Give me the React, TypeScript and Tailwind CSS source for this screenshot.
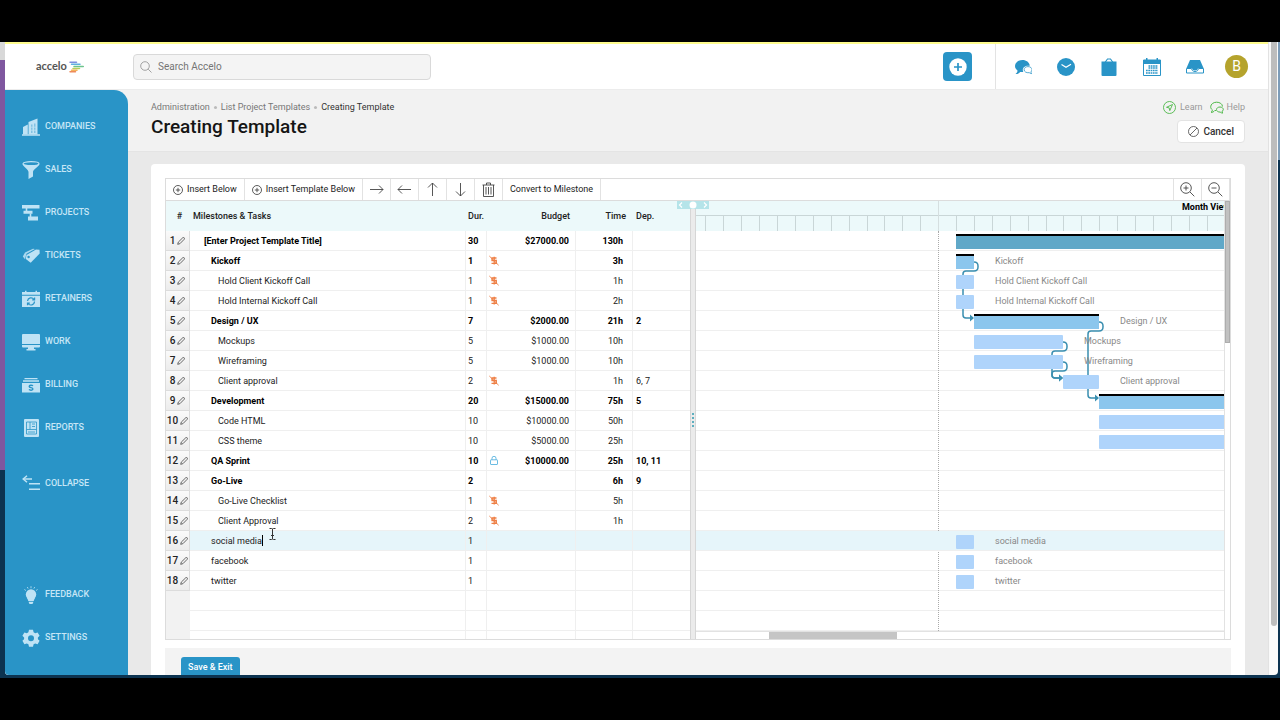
import { useState } from "react";
import type { ReactNode } from "react";

type Task = {
  id: number;
  name: string;
  level: 0 | 1 | 2;
  bold?: boolean;
  dur: number;
  flag?: "nonbillable" | "locked";
  budget?: string;
  time?: string;
  dep?: string;
  bar?: { start: number; days: number; kind: "project" | "milestone" | "task"; label?: string };
};

const tasks: Task[] = [
  { id: 1, name: "[Enter Project Template Title]", level: 0, bold: true, dur: 30, budget: "$27000.00", time: "130h", bar: { start: 0, days: 30, kind: "project" } },
  { id: 2, name: "Kickoff", level: 1, bold: true, dur: 1, flag: "nonbillable", time: "3h", bar: { start: 0, days: 1, kind: "milestone", label: "Kickoff" } },
  { id: 3, name: "Hold Client Kickoff Call", level: 2, dur: 1, flag: "nonbillable", time: "1h", bar: { start: 0, days: 1, kind: "task", label: "Hold Client Kickoff Call" } },
  { id: 4, name: "Hold Internal Kickoff Call", level: 2, dur: 1, flag: "nonbillable", time: "2h", bar: { start: 0, days: 1, kind: "task", label: "Hold Internal Kickoff Call" } },
  { id: 5, name: "Design / UX", level: 1, bold: true, dur: 7, budget: "$2000.00", time: "21h", dep: "2", bar: { start: 1, days: 7, kind: "milestone", label: "Design / UX" } },
  { id: 6, name: "Mockups", level: 2, dur: 5, budget: "$1000.00", time: "10h", bar: { start: 1, days: 5, kind: "task", label: "Mockups" } },
  { id: 7, name: "Wireframing", level: 2, dur: 5, budget: "$1000.00", time: "10h", bar: { start: 1, days: 5, kind: "task", label: "Wireframing" } },
  { id: 8, name: "Client approval", level: 2, dur: 2, flag: "nonbillable", time: "1h", dep: "6, 7", bar: { start: 6, days: 2, kind: "task", label: "Client approval" } },
  { id: 9, name: "Development", level: 1, bold: true, dur: 20, budget: "$15000.00", time: "75h", dep: "5", bar: { start: 8, days: 20, kind: "milestone" } },
  { id: 10, name: "Code HTML", level: 2, dur: 10, budget: "$10000.00", time: "50h", bar: { start: 8, days: 10, kind: "task" } },
  { id: 11, name: "CSS theme", level: 2, dur: 10, budget: "$5000.00", time: "25h", bar: { start: 8, days: 10, kind: "task" } },
  { id: 12, name: "QA Sprint", level: 1, bold: true, dur: 10, flag: "locked", budget: "$10000.00", time: "25h", dep: "10, 11" },
  { id: 13, name: "Go-Live", level: 1, bold: true, dur: 2, time: "6h", dep: "9" },
  { id: 14, name: "Go-Live Checklist", level: 2, dur: 1, flag: "nonbillable", time: "5h" },
  { id: 15, name: "Client Approval", level: 2, dur: 2, flag: "nonbillable", time: "1h" },
  { id: 16, name: "social media", level: 1, dur: 1, bar: { start: 0, days: 1, kind: "task", label: "social media" } },
  { id: 17, name: "facebook", level: 1, dur: 1, bar: { start: 0, days: 1, kind: "task", label: "facebook" } },
  { id: 18, name: "twitter", level: 1, dur: 1, bar: { start: 0, days: 1, kind: "task", label: "twitter" } },
];

const SELECTED = 16;
const ROW = 20;
const DAY = 17.9;
const ORIGIN = 260;
const dayX = (day: number) => ORIGIN + Math.round(day * DAY);

const indent = { 0: "pl-[14px]", 1: "pl-[21px]", 2: "pl-[28px]" };

const barStyle = {
  project: "mt-[3px] h-[15px] border-t-2 border-black bg-[#60a8c8]",
  milestone: "mt-[3px] h-[15px] border-t-2 border-black bg-[#8bc6ed]",
  task: "mt-1 h-[14px] rounded-[1px] bg-[#afd4fb]",
};

// from: end of the first bar, drop: x of the vertical run, to: start of the next bar
const links = [
  { from: 278, row: 2, drop: 267, to: 278, target: 5 },
  { from: 367, row: 6, drop: 356, to: 367, target: 8 },
  { from: 367, row: 7, drop: 356, to: 367, target: 8 },
  { from: 403, row: 5, drop: 392, to: 403, target: 9 },
];

const linkPath = (l: (typeof links)[number]) => {
  const y = (l.row - 1) * ROW + 11;
  const end = (l.target - 1) * ROW + 7;
  return `M${l.from} ${y}q4 0 4 4v1q0 4 -4 4H${l.drop + 3}q-3 0 -3 3V${end - 3}q0 3 3 3H${l.to - 2}`;
};

function NavIcon({ children }: { children: ReactNode }) {
  return (
    <svg className="h-[18px] w-[18px] shrink-0" viewBox="0 0 18 18" fill="#bfe3f5" aria-hidden="true">
      {children}
    </svg>
  );
}

const BLUE = "#2994c7";

const mainNav = [
  {
    label: "COMPANIES",
    icon: (
      <>
        <path d="M6.500 4L15.500 .5V16.500H6.500z" />
        <path d="M1 9l4.800-2.500v10H1z" />
        <path d="M0 16.200h18v1.500H0z" />
        <path d="M9 6.500h1.500V15H9zM12 5.500h1.500V15H12z" fill={BLUE} opacity=".4" />
        <path d="M8 9.200h7M8 12.200h7" stroke="#bfe3f5" strokeWidth=".8" />
      </>
    ),
  },
  {
    label: "SALES",
    icon: (
      <>
        <path d="M.6 3C1 5.500 6.500 8.500 6.500 11v7l4.500-2.500V11c0-2.500 6-5.500 6.400-8z" />
        <ellipse cx="9" cy="2.700" rx="8" ry="2" fill={BLUE} stroke="#bfe3f5" strokeWidth="1.200" />
      </>
    ),
  },
  {
    label: "PROJECTS",
    icon: (
      <>
        <path d="M0 1h17.500v3.400H0zM1.500 6.800h9v3H1.500zM6 12.500h10v4H6z" />
        <path d="M4.500 4v3M8.500 9.500v3.500" stroke="#bfe3f5" strokeWidth="1.600" />
      </>
    ),
  },
  {
    label: "TICKETS",
    icon: (
      <>
        <path d="M.8 9.500L3 5.500l8-3.800 2 .3-8.500 4.700-1.500 5.600z" opacity=".85" />
        <path d="M4.500 8L14 2.500l3.500.3.2 3.700-9 9.300L3.800 12z" />
        <circle cx="6.600" cy="10" r="1.200" fill={BLUE} />
      </>
    ),
  },
  {
    label: "RETAINERS",
    icon: (
      <>
        <path d="M0 2h3V.8h1.500V2h9V.8H15V2h3v2.700H0zM0 5.800h18V17H0z" />
        <path d="M5.500 11a3.600 3.600 0 016.500-1.700M12.500 11.500A3.600 3.600 0 016 13.500M12.600 7.500v2.300h-2.400M5.500 15.300v-2.200h2.300" fill="none" stroke={BLUE} strokeWidth="1.200" />
      </>
    ),
  },
  {
    label: "WORK",
    icon: (
      <>
        <path d="M1 1h16a1 1 0 011 1v9H0V2a1 1 0 011-1z" />
        <path d="M0 12h18v1.500a1 1 0 01-1 1h-5V16h1.500v1.500h-9V16H6v-1.500H1a1 1 0 01-1-1z" />
      </>
    ),
  },
  {
    label: "BILLING",
    icon: (
      <>
        <path d="M2.500 2h13v1.200h-13zM1 4.300h16v1.400H1zM0 7h18v9.500H0z" />
        <path d="M11 9.800c-1-.8-3.800-.8-3.800.6 0 1.800 3.700.7 3.700 2.500 0 1.500-2.800 1.500-4 .6M9 8.500v1M9 14v1" fill="none" stroke={BLUE} strokeWidth="1.400" />
      </>
    ),
  },
  {
    label: "REPORTS",
    icon: (
      <>
        <rect x="2" y="0" width="15" height="18" rx="1" />
        <path d="M4.500 3h10v12h-10zM4.500 10.500h10M8 3v7.500M10 5h3M10 7.500h3M6 13h7" fill="none" stroke={BLUE} strokeWidth=".8" />
      </>
    ),
  },
  {
    label: "COLLAPSE",
    icon: (
      <>
        <path d="M7 8h11v1.600H7zM7 13.500h11V15H7zM1 3.300h9v1.500H1z" />
        <path d="M5 .8L1.200 4 5 7.300" fill="none" stroke="#bfe3f5" strokeWidth="1.500" />
      </>
    ),
  },
];

const footNav = [
  {
    label: "FEEDBACK",
    icon: (
      <>
        <circle cx="9" cy="8.500" r="5.200" />
        <path d="M5 11.500h8L11.700 15H6.300zM6.500 15.800h5L10.500 18h-3z" />
        <path d="M9 .2v2M5.300 1l.8 1.600M12.700 1l-.8 1.600M2.400 3.500l1.500 1M15.600 3.500l-1.500 1" stroke="#bfe3f5" strokeWidth=".8" />
      </>
    ),
  },
  {
    label: "SETTINGS",
    icon: (
      <path
        fillRule="evenodd"
        d="M7 .8h4l.6 2.500 1.600.9 2.400-.8 2 3.400L15.900 8.500v1.700l1.700 1.600-2 3.400-2.400-.8-1.600.9-.6 2.500H7l-.6-2.500-1.600-.9-2.400.8-2-3.400 1.700-1.600V8.500L.4 6.800l2-3.400 2.400.8 1.600-.9zM9 6.300a3 3 0 100 6 3 3 0 000-6z"
      />
    ),
  },
];

function NavLink({ label, icon, className = "" }: { label: string; icon: ReactNode; className?: string }) {
  return (
    <a href="#" className={`flex h-[43px] items-center gap-[5px] pl-[17px] text-[9px] font-medium text-[#c6e6f6] ${className}`}>
      <NavIcon>{icon}</NavIcon>
      {label}
    </a>
  );
}

function Sidebar() {
  return (
    <nav className="flex w-[123px] shrink-0 flex-col rounded-tr-[14px] bg-[#2994c7] pt-[15px] pb-4">
      {mainNav.map((item) => (
        <NavLink key={item.label} {...item} className={item.label === "COLLAPSE" ? "mt-[13px]" : ""} />
      ))}
      <div className="mt-auto">
        {footNav.map((item) => (
          <NavLink key={item.label} {...item} />
        ))}
      </div>
    </nav>
  );
}

function Logo() {
  return (
    <a href="#" className="flex items-center gap-[2px] pl-[31px] font-[Lato,sans-serif] text-[11px] font-bold text-[#555]" aria-label="accelo home">
      accelo
      <svg className="h-3 w-[15px]" viewBox="0 0 15 12" fill="none" strokeWidth="1.500" strokeLinecap="round" aria-hidden="true">
        <path d="M1 1.200h6.500" stroke="#7d8fe0" />
        <path d="M2.500 3.200h8.500" stroke="#5fb0e0" />
        <path d="M5 5.500h9.300" stroke="#6cc48c" />
        <path d="M4 7.500h6.500" stroke="#b7cf5c" />
        <path d="M2.500 9.200h5.500" stroke="#f3b25a" />
        <path d="M1 10.800h5.500" stroke="#ee8a5a" />
      </svg>
    </a>
  );
}

const quickLinks = [
  {
    label: "Messages",
    icon: (
      <>
        <path d="M8.500 2C4.300 2 1 4.600 1 8c0 2 1 3.400 2.500 4.500 0 1.500-.8 2.700-2 3.500 2 .2 3.500-.6 4.800-2h3a4.500 4.500 0 01-.5-2c0-2.600 2.300-4.200 5.200-4.200h1.800C15.500 4.300 12.300 2 8.500 2z" />
        <path d="M14 8.600c2.300 0 4 1.400 4 3.100 0 1-.4 1.700-1.100 2.200 0 .8.300 1.300.9 1.700-1.100.1-1.800-.3-2.500-.9-3 .3-5.200-1-5.200-3 0-1.800 1.700-3.100 3.900-3.100z" fill="#fff" stroke="#2994c7" strokeWidth=".8" />
      </>
    ),
  },
  {
    label: "Timers",
    icon: (
      <>
        <circle cx="9" cy="9" r="9" />
        <path d="M4.500 6.500L9 9.300l5-3" fill="none" stroke="#fff" strokeWidth="1.200" />
      </>
    ),
  },
  {
    label: "Tasks",
    icon: (
      <>
        <path d="M1.500 3.500h15V17a1 1 0 01-1 1h-13a1 1 0 01-1-1z" />
        <path d="M5 4.500L7.500 1h3L13 4.500" fill="none" stroke="#2994c7" strokeWidth="1.200" />
      </>
    ),
  },
  {
    label: "Calendar",
    icon: (
      <>
        <path d="M.5 2h17v15.500H.5z" fill="none" stroke="#2994c7" />
        <path d="M.5 2h17v4H.5zM3 0h1.500v2H3zM13.500 0H15v2h-1.500z" />
        <path d="M3 15h12M3 12.500h12M5.500 10h9.500M5.500 8h9.500" fill="none" stroke="#2994c7" strokeWidth="1.400" strokeDasharray="1.700 .6" />
      </>
    ),
  },
  {
    label: "Inbox",
    icon: (
      <>
        <path d="M4 2h10l3.500 8H12c0 1.500-1.200 2.500-3 2.500S6 11.500 6 10H.5z" />
        <path d="M.5 10.500h5c.2 1.800 1.500 3 3.500 3s3.300-1.200 3.500-3h5V15H.5z" fill="#fff" stroke="#2994c7" />
      </>
    ),
  },
];

function TopBar() {
  return (
    <header className="flex h-[46px] shrink-0 items-stretch border-b border-[#ececec] bg-white">
      <div className="flex w-[128px] shrink-0 items-center">
        <Logo />
      </div>
      <div className="my-auto flex h-[26px] w-[298px] items-center gap-[6px] rounded-[4px] border border-[#d9d9d9] bg-[#f4f4f4] px-[6px]">
        <svg className="h-3 w-3 shrink-0" viewBox="0 0 12 12" fill="none" stroke="#999" strokeWidth=".9" aria-hidden="true">
          <circle cx="5" cy="5" r="4.300" />
          <path d="M8.200 8.200L11.500 11.500" />
        </svg>
        <input type="search" aria-label="Search Accelo" placeholder="Search Accelo" className="min-w-0 flex-1 bg-transparent text-[10px] outline-none placeholder:text-[#757575]" />
      </div>
      <button type="button" aria-label="Create" className="my-auto ml-auto flex h-[29px] w-[29px] items-center justify-center rounded-[4px] bg-[#2994c7]">
        <svg className="h-[18px] w-[18px]" viewBox="0 0 18 18" aria-hidden="true">
          <circle cx="9" cy="9" r="8.700" fill="#fff" />
          <path d="M9 5v8M5 9h8" stroke="#2994c7" strokeWidth="1.700" />
        </svg>
      </button>
      <div className="ml-[23px] flex items-center gap-[25px] border-l border-[#e3e3e3] pr-5 pl-[18px]">
        {quickLinks.map((q) => (
          <button key={q.label} type="button" aria-label={q.label}>
            <svg className="h-[18px] w-[18px]" viewBox="0 0 18 18" fill="#2994c7" aria-hidden="true">
              {q.icon}
            </svg>
          </button>
        ))}
        <button type="button" aria-label="Account" className="-ml-1 flex h-[23px] w-[23px] items-center justify-center rounded-full bg-[#b5a32c] text-[14px] text-white">
          B
        </button>
      </div>
    </header>
  );
}

function PageHeader() {
  return (
    <div className="flex h-[62px] shrink-0 justify-between border-b border-[#e4e4e4] bg-[#f2f2f2] pr-[23px] pl-[23px]">
      <div className="pt-[10px]">
        <nav aria-label="Breadcrumb" className="flex items-center gap-1 text-[9px] leading-[14px] text-[#777]">
          <a href="#">Administration</a>
          <span className="h-[3px] w-[3px] rounded-full bg-[#bbb]" />
          <a href="#">List Project Templates</a>
          <span className="h-[3px] w-[3px] rounded-full bg-[#bbb]" />
          <span className="text-[#333]">Creating Template</span>
        </nav>
        <h1 className="text-[19px] leading-[26px] font-medium text-[#151515]">Creating Template</h1>
      </div>
      <div className="flex flex-col items-end gap-[5px] pt-[10px]">
        <div className="flex items-center gap-[7px] text-[9px] leading-[15px] text-[#999]">
          <a href="#" className="flex items-center gap-1">
            <svg className="h-[13px] w-[13px]" viewBox="0 0 13 13" fill="none" stroke="#4db848" strokeWidth=".9" aria-hidden="true">
              <circle cx="6.500" cy="6.500" r="6" />
              <path d="M9.500 3.500L3.500 6.300l2.700.6.600 2.700z" />
            </svg>
            Learn
          </a>
          <a href="#" className="flex items-center gap-[3px]">
            <svg className="h-[13px] w-[14px]" viewBox="0 0 14 13" fill="none" stroke="#4db848" strokeWidth="1" aria-hidden="true">
              <path d="M6 9.500H4.800C3.800 10.800 2.500 11.500 1 11.300c1-.7 1.400-1.500 1.300-2.500C1.200 8 .7 7 .7 5.800.7 3.200 3.300 1.200 6.600 1.200c3.200 0 5.800 1.700 5.900 4.300" />
              <path d="M10 6c-2 0-3.500 1.100-3.500 2.600s1.500 2.500 3.700 2.500c.8.700 1.700 1 2.800.9-.7-.4-1-1-1-1.600.9-.4 1.300-1.100 1.300-1.800C13.300 7.100 11.900 6 10 6z" />
            </svg>
            Help
          </a>
        </div>
        <button type="button" className="flex h-[23px] items-center gap-1 rounded-[4px] border border-[#e3e3e3] bg-white px-[10px] text-[10px] font-medium text-[#333]">
          <svg className="h-[11px] w-[11px]" viewBox="0 0 11 11" fill="none" stroke="#444" strokeWidth=".8" aria-hidden="true">
            <circle cx="5.500" cy="5.500" r="5" />
            <path d="M9 2L2 9" />
          </svg>
          Cancel
        </button>
      </div>
    </div>
  );
}

function PlusCircle() {
  return (
    <svg className="h-[10px] w-[10px]" viewBox="0 0 10 10" fill="none" stroke="#333" strokeWidth=".8" aria-hidden="true">
      <circle cx="5" cy="5" r="4.500" />
      <path d="M5 2.800v4.400M2.800 5h4.400" />
    </svg>
  );
}

const toolButtons = [
  { label: "Indent", d: "M1 7.500h13M10 3.500l4 4-4 4" },
  { label: "Outdent", d: "M14 7.500H1M5 3.500l-4 4 4 4" },
  { label: "Move up", d: "M7.500 14V1M3 5.500L7.500 1 12 5.500" },
  { label: "Move down", d: "M7.500 1v13M3 9.500L7.500 14 12 9.500" },
  { label: "Delete", d: "M1.500 3h12M5.500 3V1h4v2M2.500 3v11.500h10V3M5 5v7.500M7.500 5v7.500M10 5v7.500" },
];

function Toolbar() {
  const text = "flex items-center gap-1 border-r border-[#e2e2e2] px-[7px]";
  return (
    <div className="flex h-[22px] border-b border-[#dcdcdc] text-[9px] text-[#222]">
      <button type="button" className={text}>
        <PlusCircle />
        Insert Below
      </button>
      <button type="button" className={text}>
        <PlusCircle />
        Insert Template Below
      </button>
      {toolButtons.map((b) => (
        <button key={b.label} type="button" aria-label={b.label} className="flex w-7 items-center justify-center border-r border-[#e2e2e2]">
          <svg className="h-[15px] w-[15px]" viewBox="0 0 15 15" fill="none" stroke="#444" strokeWidth=".9" aria-hidden="true">
            <path d={b.d} />
          </svg>
        </button>
      ))}
      <button type="button" className={text}>
        Convert to Milestone
      </button>
      <div className="ml-auto flex border-l border-[#e2e2e2]">
        {["Zoom in", "Zoom out"].map((label) => (
          <button key={label} type="button" aria-label={label} className="flex w-7 items-center justify-center border-r border-[#e2e2e2]">
            <svg className="h-[15px] w-[15px]" viewBox="0 0 15 15" fill="none" stroke="#444" strokeWidth=".9" aria-hidden="true">
              <circle cx="6" cy="6" r="5.300" />
              <path d="M10 10l4.300 4.300M3.500 6h5" />
              {label === "Zoom in" && <path d="M6 3.500v5" />}
            </svg>
          </button>
        ))}
      </div>
    </div>
  );
}

function Flag({ kind }: { kind: Task["flag"] }) {
  if (kind === "locked") {
    return (
      <svg className="ml-px h-[9px] w-[8px]" viewBox="0 0 8 9" fill="none" stroke="#5ab4e0" strokeWidth=".9" role="img" aria-label="Locked">
        <rect x=".5" y="3.800" width="7" height="4.700" rx=".5" />
        <path d="M2 3.800V2.300a2 2 0 014 0v1.500" />
      </svg>
    );
  }
  return (
    <svg className="h-[11px] w-[10px]" viewBox="0 0 10 11" fill="none" stroke="#ee7f45" role="img" aria-label="Non-billable">
      <path d="M7.500 3H3v2.500h4.300V8.300H2.500M5.200 1.800v7.700" strokeWidth="1.300" />
      <path d="M.3 1L9.700 10.300" strokeWidth=".9" />
    </svg>
  );
}

function TaskTable() {
  const [draft, setDraft] = useState("social media");
  const cell = "h-5 border-b border-[#efefef] p-0";
  const split = "border-r border-[#efefef]";

  return (
    <table className="w-full table-fixed border-separate border-spacing-0 text-[9px] leading-[14px] text-[#222]">
      <colgroup>
        <col className="w-6" />
        <col />
        <col className="w-[21px]" />
        <col className="w-[19px]" />
        <col className="w-[70px]" />
        <col className="w-[57px]" />
        <col className="w-[57px]" />
      </colgroup>
      <thead>
        <tr className="bg-[#ecf9fa] text-left">
          <th className="h-[30px] p-0 pl-[3px] text-center font-medium">#</th>
          <th className="p-0 pl-[3px] font-medium">Milestones &amp; Tasks</th>
          <th className="p-0 pl-[2px] font-medium">Dur.</th>
          <th className="p-0 pr-[6px] text-right font-medium" colSpan={2}>
            Budget
          </th>
          <th className="p-0 pr-[7px] text-right font-medium">Time</th>
          <th className="p-0 pl-[3px] font-medium">Dep.</th>
        </tr>
      </thead>
      <tbody>
        {tasks.map((t) => {
          const selected = t.id === SELECTED;
          return (
            <tr key={t.id} className={`${t.bold ? "font-bold text-black" : ""} ${selected ? "bg-[#e6f5fa]" : ""}`}>
              <th scope="row" className="h-5 border-r border-b border-[#dcdcdc] bg-linear-to-b from-[#fafafa] to-[#ececec] p-0 text-[10px] font-medium text-[#222]">
                <span className="flex items-center justify-center gap-[2px]">
                  {t.id}
                  <button type="button" aria-label={`Edit row ${t.id}`}>
                    <svg className="h-2 w-2" viewBox="0 0 8 8" fill="none" stroke="#444" strokeWidth=".8" aria-hidden="true">
                      <path d="M.7 7.300l.6-2.200L5.700.8q1-.5 1.500 0t0 1.500L2.900 6.700z" />
                    </svg>
                  </button>
                </span>
              </th>
              <td className={`${cell} ${split} ${indent[t.level]}`}>
                {selected ? (
                  <span className="relative flex h-[14px] items-center">
                    <input
                      aria-label="Task name"
                      value={draft}
                      onChange={(e) => setDraft(e.target.value)}
                      className="field-sizing-content bg-transparent outline-none"
                    />
                    <span className="h-[11px] w-px bg-black" />
                    <svg className="absolute -top-1.5 left-[57px] h-3 w-[9px]" viewBox="0 0 9 12" fill="none" stroke="#333" aria-hidden="true">
                      <path d="M1.500 .5h2q1 0 1 1v9q0 1-1 1h-2M7.500 .5h-2q-1 0-1 1v9q0 1 1 1h2M3 7.500h3" />
                    </svg>
                  </span>
                ) : (
                  t.name
                )}
              </td>
              <td className={`${cell} ${split} pl-[2px]`}>{t.dur}</td>
              <td className={`${cell} pl-[2px]`}>{t.flag && <Flag kind={t.flag} />}</td>
              <td className={`${cell} ${split} pr-[6px] text-right`}>{t.budget}</td>
              <td className={`${cell} ${split} pr-[9px] text-right`}>{t.time}</td>
              <td className={`${cell} pl-[3px]`}>{t.dep}</td>
            </tr>
          );
        })}
        {[0, 1, 2].map((n) => (
          <tr key={n}>
            <td className="h-5 bg-[#f2f2f2] p-0" />
            <td className={`${cell} ${split}`} />
            <td className={`${cell} ${split}`} />
            <td className={cell} />
            <td className={`${cell} ${split}`} />
            <td className={`${cell} ${split}`} />
            <td className={cell} />
          </tr>
        ))}
      </tbody>
    </table>
  );
}

function Splitter() {
  return (
    <div className="relative flex w-[6px] shrink-0 flex-col items-center justify-center gap-[2px] border-x border-[#d6d6d6] bg-[#ebebeb]">
      {[0, 1, 2, 3].map((n) => (
        <span key={n} className="h-[2px] w-[2px] rounded-full bg-[#2f9bb0]" />
      ))}
      <svg className="absolute top-0 -left-[14px] z-10 h-2 w-8" viewBox="0 0 32 8" aria-hidden="true">
        <path d="M0 0h32v8H0z" fill="#b5e4e9" />
        <path d="M5 1.500L2.500 4 5 6.500M27 1.500L29.500 4 27 6.500" fill="none" stroke="#fff" strokeWidth="1.200" />
        <circle cx="16" cy="4" r="3.500" fill="#fff" />
      </svg>
    </div>
  );
}

function Gantt() {
  return (
    <div className="flex min-w-0 flex-1">
      <div className="flex min-w-0 flex-1 flex-col">
        <div className="relative h-[30px] shrink-0 overflow-hidden bg-[#ecf9fa]">
          <div className="flex h-[15px] items-center justify-end overflow-hidden border-b border-[#c9d6d7] text-[9px] font-bold text-black">
            <span className="-mr-[6px] whitespace-nowrap">Month View</span>
          </div>
          {Array.from({ length: 60 }, (_, i) => i - 14).map((d) => (
            <span
              key={d}
              className={`absolute bottom-0 w-px ${d === -1 ? "h-[30px] bg-[#d5dfe0]" : "h-[15px] bg-[#c9d6d7]"}`}
              style={{ left: dayX(d) }}
            />
          ))}
        </div>
        <div className="relative min-h-0 flex-1 overflow-hidden text-[9px] leading-5 text-[#888]">
          <div className="absolute inset-y-0 border-l border-dotted border-[#aaa]" style={{ left: dayX(-1) }} />
          {Array.from({ length: 21 }, (_, i) => (
            <div key={i} className={`h-5 border-b border-[#efefef] ${i + 1 === SELECTED ? "relative bg-[#e6f5fa]" : ""}`} />
          ))}
          <svg className="absolute top-0 left-0 h-full w-full" fill="none" stroke="#3a8fb0" strokeWidth="1.500" aria-hidden="true">
            {links.map((l) => (
              <g key={l.row}>
                <path d={linkPath(l)} />
                <path d={`M${l.to} ${(l.target - 1) * ROW + 7}l-4 -3.500v7z`} fill="#3a8fb0" stroke="none" />
              </g>
            ))}
          </svg>
          {tasks.map(
            (t) =>
              t.bar && (
                <div key={t.id} className="absolute flex items-start whitespace-nowrap" style={{ top: (t.id - 1) * ROW, left: dayX(t.bar.start) }}>
                  <div className={barStyle[t.bar.kind]} style={{ width: dayX(t.bar.start + t.bar.days) - dayX(t.bar.start) }} />
                  {t.bar.label && <span className="ml-[21px]">{t.bar.label}</span>}
                </div>
              ),
          )}
        </div>
        <div className="h-2 shrink-0 border-t border-[#e2e2e2] bg-white pl-[73px]">
          <div className="h-full w-[128px] bg-[#c5c5c5]" />
        </div>
      </div>
      <div className="w-[6px] shrink-0 border-l border-[#e2e2e2] bg-white">
        <div className="h-[142px] border border-[#adadad] bg-[#c1c1c1]" />
      </div>
    </div>
  );
}

export default function App() {
  return (
    <div className="flex h-screen flex-col bg-black py-[42px] font-[Roboto,sans-serif]">
      {/* Desktop behind the browser window */}
      <div className="flex min-h-0 flex-1 bg-[#0c3350] pb-[3px]">
        <div className="flex w-[5px] shrink-0 flex-col">
          <div className="h-[18px] bg-[#d8d8d8]" />
          <div className="h-[410px] bg-[#7f579f]" />
        </div>

        <div className="flex min-w-0 flex-1 overflow-hidden rounded-b-[4px] bg-[#fafafa]">
          <div className="flex min-w-0 flex-1 flex-col border-t-2 border-[#fdfb8e]">
            <TopBar />
            <div className="flex min-h-0 flex-1 bg-[#f2f2f2]">
              <Sidebar />
              <main className="flex min-w-0 flex-1 flex-col bg-[#e9e9e9]">
                <PageHeader />
                <section className="mx-[23px] mt-3 flex min-h-0 flex-1 flex-col overflow-hidden rounded-t-[4px] bg-white px-[14px] pt-[14px]">
                  <div className="flex min-h-0 flex-1 flex-col border border-[#dcdcdc]">
                    <Toolbar />
                    <div className="flex min-h-0 flex-1">
                      <div className="w-[524px] shrink-0 overflow-hidden">
                        <TaskTable />
                      </div>
                      <Splitter />
                      <Gantt />
                    </div>
                  </div>
                  <div className="mt-2 flex h-[27px] shrink-0 items-start overflow-hidden bg-[#f3f3f3] pt-[9px] pl-4">
                    <button type="button" className="h-[22px] shrink-0 rounded-[3px] bg-[#2994c7] px-[7px] text-[9px] font-medium text-white">
                      Save &amp; Exit
                    </button>
                  </div>
                </section>
              </main>
            </div>
          </div>

          {/* Page scrollbar */}
          <div className="w-[10px] shrink-0 border-l border-[#e2e2e2] pl-[2px]">
            <div className="h-[584px] w-[6px] rounded-b-full bg-[#bdbdbd]" />
          </div>
        </div>

        <div className="w-[2px] shrink-0">
          <div className="h-[118px] bg-[#7d9cb8]" />
        </div>
      </div>
    </div>
  );
}
